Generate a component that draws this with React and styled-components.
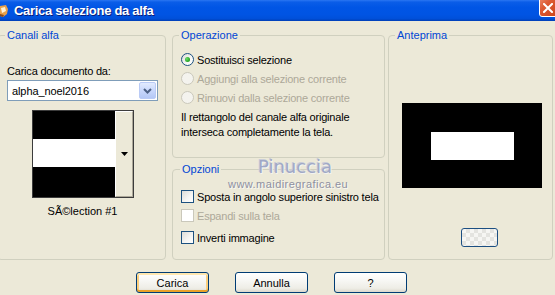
import React from "react";
import styled, { createGlobalStyle } from "styled-components";

const GlobalStyle = createGlobalStyle`
  html, body { margin: 0; padding: 0; background: #ECE9D8; overflow: hidden; }
  body { font-family: "Liberation Sans", Arial, sans-serif; font-size: 11px; color: #000; }
  * { box-sizing: border-box; }
`;

const Window = styled.div`
  position: relative;
  width: 555px;
  height: 295px;
  background: #ECE9D8;
  display: flex;
  flex-direction: column;
  overflow: hidden;
`;

const TitleBar = styled.div`
  flex: none;
  height: 21px;
  display: flex;
  align-items: center;
  overflow: hidden;
  background: linear-gradient(to bottom, #2A76F2 0%, #0A5DE8 10%, #0055E5 35%, #0054E3 70%, #0050DA 88%, #003FB6 100%);
`;

const TitleIcon = styled.svg`
  flex: none;
  width: 9px;
  height: 16px;
  margin-right: 5px;
`;

const TitleText = styled.div`
  font-weight: bold;
  font-size: 13px;
  color: #fff;
  letter-spacing: -0.3px;
  text-shadow: 1px 1px 0 #0A1E7A;
`;

const CloseButton = styled.div`
  margin-left: auto;
  margin-right: -6px;
  align-self: flex-start;
  margin-top: -4px;
  width: 22px;
  height: 21px;
  border: 1px solid #fff;
  border-radius: 3px;
  background: linear-gradient(135deg, #EC8A6C 0%, #DD5A33 35%, #C9401A 100%);
  display: flex;
  align-items: center;
  justify-content: center;
  padding-top: 3px;
  padding-right: 5px;
`;

const Content = styled.div`
  flex: none;
  height: 239px;
  padding-top: 7px;
  display: flex;
  align-items: stretch;
`;

const Group = styled.fieldset`
  margin: 0 0 0 ${(p) => p.$ml || 0}px;
  padding: 0;
  min-width: 0;
  width: ${(p) => p.$w}px;
  ${(p) => (p.$h ? `height: ${p.$h}px;` : "")}
  flex: none;
  border: 1px solid #D0D0BF;
  border-radius: 4px;
`;

const Legend = styled.legend`
  color: #0046D5;
  font-size: 11px;
  line-height: 14px;
  padding: 0 2px;
  margin-left: ${(p) => p.$ml}px;
`;

const Column = styled.div`
  display: flex;
  flex-direction: column;
  gap: 4px;
  margin-left: ${(p) => p.$ml || 0}px;
`;

const LeftBody = styled.div`
  display: flex;
  flex-direction: column;
  padding: 22px 0 0 9px;
`;

const Label = styled.div`
  line-height: 14px;
  letter-spacing: -0.2px;
`;

const Select = styled.div`
  margin-top: 2px;
  width: 151px;
  height: 21px;
  border: 1px solid #7F9DB9;
  background: #fff;
  display: flex;
  align-items: center;
  padding: 0 1px 0 4px;
`;

const SelectValue = styled.div`
  flex: 1;
  letter-spacing: -0.1px;
`;

const ComboButton = styled.div`
  width: 17px;
  height: 17px;
  border: 1px solid #BACBF6;
  border-radius: 2px;
  background: linear-gradient(to bottom, #E2EBFE 0%, #C9D8FC 50%, #B4C8F6 100%);
  display: flex;
  align-items: center;
  justify-content: center;
`;

const PickerFrame = styled.div`
  margin: 9px 0 0 25px;
  width: 102px;
  height: 88px;
  border: 1px solid #3C3C3C;
  display: flex;
`;

const PickerImage = styled.div`
  width: 82px;
  display: flex;
  flex-direction: column;
`;

const Stripe = styled.div`
  height: ${(p) => p.$h}px;
  background: ${(p) => p.$c};
`;

const PickerButton = styled.div`
  flex: 1;
  background: #ECE9D8;
  border-left: 1px solid #fff;
  border-top: 1px solid #fff;
  border-right: 1px solid #ACA899;
  border-bottom: 1px solid #ACA899;
  display: flex;
  align-items: center;
  justify-content: center;
`;

const Caption = styled.div`
  margin-top: 6px;
  width: 151px;
  text-align: center;
  line-height: 14px;
`;

const OpBody = styled.div`
  display: flex;
  flex-direction: column;
  padding: 8px 0 0 8px;
`;

const OptionRow = styled.div`
  height: 19px;
  display: flex;
  align-items: center;
  gap: 3px;
  margin-top: ${(p) => p.$mt || 0}px;
  color: ${(p) => (p.$disabled ? "#ACA899" : "#000")};
  letter-spacing: -0.2px;
`;

const Radio = styled.span`
  flex: none;
  width: 13px;
  height: 13px;
  border-radius: 50%;
  border: 1px solid ${(p) => (p.$disabled ? "#CAC8BB" : "#1C5180")};
  background: ${(p) =>
    p.$disabled ? "#F4F3EE" : "linear-gradient(135deg, #DCDCD7 0%, #F8F8F6 60%, #fff 100%)"};
  display: flex;
  align-items: center;
  justify-content: center;
`;

const RadioDot = styled.span`
  width: 5px;
  height: 5px;
  border-radius: 50%;
  background: radial-gradient(circle at 35% 35%, #6BDD6B 0%, #21A121 70%, #1A8A1A 100%);
`;

const Info = styled.div`
  margin-top: 3px;
  line-height: 15px;
  letter-spacing: -0.2px;
`;

const OptBody = styled.div`
  display: flex;
  flex-direction: column;
  padding: 11px 0 0 8px;
`;

const Checkbox = styled.span`
  flex: none;
  width: 13px;
  height: 13px;
  border: 1px solid ${(p) => (p.$disabled ? "#CAC8BB" : "#1C5180")};
  background: ${(p) =>
    p.$disabled ? "#fff" : "linear-gradient(135deg, #DCDCD7 0%, #F6F6F4 60%, #fff 100%)"};
`;

const PreviewBody = styled.div`
  display: flex;
  flex-direction: column;
  padding: 61px 0 0 13px;
`;

const PreviewCanvas = styled.div`
  width: 140px;
  height: 85px;
  background: #000;
  display: flex;
  align-items: center;
  justify-content: center;
`;

const PreviewSelection = styled.div`
  width: 83px;
  height: 28px;
  margin: 1px 0 0 1px;
  background: #fff;
`;

const BgButton = styled.div`
  margin: 40px 0 0 59px;
  width: 37px;
  height: 19px;
  border: 1px solid #1C4F82;
  border-radius: 3px;
  background-color: #F6F6F3;
  background-image: linear-gradient(45deg, #E4E4E0 25%, transparent 25%, transparent 75%, #E4E4E0 75%),
    linear-gradient(45deg, #E4E4E0 25%, transparent 25%, transparent 75%, #E4E4E0 75%);
  background-size: 8px 8px;
  background-position: 0 0, 4px 4px;
`;

const ButtonRow = styled.div`
  flex: none;
  display: flex;
  gap: 26px;
  padding: 12px 0 0 136px;
`;

const Button = styled.div`
  width: 73px;
  height: 21px;
  border: 1px solid #003C74;
  border-radius: 3px;
  background: linear-gradient(to bottom, #FFFFFF 0%, #F7F7F4 40%, #EEEDE6 80%, #DCD8CC 100%);
  display: flex;
  align-items: center;
  justify-content: center;
  font-size: 11px;
  ${(p) =>
    p.$default
      ? `box-shadow: inset 0 2px 0 #FFE7B0, inset 0 -2px 0 #E9A22A, inset 2px 0 0 #FBCF7E, inset -2px 0 0 #FBCF7E;`
      : ""}
`;

const Watermark = styled.div`
  position: absolute;
  left: 228px;
  top: 156px;
  display: flex;
  flex-direction: column;
  align-items: flex-start;
  pointer-events: none;
`;

const WatermarkName = styled.div`
  margin-left: 30px;
  font-family: "DejaVu Sans", sans-serif;
  font-size: 18px;
  line-height: 22px;
  color: #A0A8C6;
  letter-spacing: 0px;
  text-shadow: 1px 1px 0 #F4F4F0, -1px -1px 0 #C8CCD8;
`;

const WatermarkUrl = styled.div`
  font-family: "Liberation Sans", Arial, sans-serif;
  font-size: 11px;
  line-height: 12px;
  color: #8E90A0;
  letter-spacing: 0.45px;
  text-shadow: 1px 1px 0 #F8F8F4;
`;

export default function App() {
  return (
    <>
      <GlobalStyle />
      <Window>
        <TitleBar>
          <TitleIcon viewBox="0 0 9 16">
            <path d="M0 3 L6 2 L8 6 L7 11 L3 14 L0 13 Z" fill="#E8A04A" />
            <path d="M1 5 L5 4 L6 8 L2 10 Z" fill="#FFF3D8" />
            <path d="M0 11 L4 12 L3 14 L0 13 Z" fill="#8A4A1A" />
          </TitleIcon>
          <TitleText>Carica selezione da alfa</TitleText>
          <CloseButton>
            <svg width="10" height="10" viewBox="0 0 10 10">
              <path d="M1 1 L9 9 M9 1 L1 9" stroke="#fff" strokeWidth="2" strokeLinecap="square" />
            </svg>
          </CloseButton>
        </TitleBar>

        <Content>
          <Group $w={169} $ml={-3}>
            <Legend $ml={7}>Canali alfa</Legend>
            <LeftBody>
              <Label>Carica documento da:</Label>
              <Select>
                <SelectValue>alpha_noel2016</SelectValue>
                <ComboButton>
                  <svg width="9" height="6" viewBox="0 0 9 6">
                    <path d="M1 1 L4.5 4.5 L8 1" stroke="#4D6185" strokeWidth="2" fill="none" />
                  </svg>
                </ComboButton>
              </Select>
              <PickerFrame>
                <PickerImage>
                  <Stripe $h={28} $c="#000" />
                  <Stripe $h={28} $c="#fff" />
                  <Stripe $h={30} $c="#000" />
                </PickerImage>
                <PickerButton>
                  <svg width="7" height="4" viewBox="0 0 7 4">
                    <path d="M0 0 H7 L3.5 4 Z" fill="#000" />
                  </svg>
                </PickerButton>
              </PickerFrame>
              <Caption>SÃ©lection #1</Caption>
            </LeftBody>
          </Group>

          <Column $ml={6}>
            <Group $w={213} $h={130}>
              <Legend $ml={6}>Operazione</Legend>
              <OpBody>
                <OptionRow>
                  <Radio>
                    <RadioDot />
                  </Radio>
                  Sostituisci selezione
                </OptionRow>
                <OptionRow $disabled>
                  <Radio $disabled />
                  Aggiungi alla selezione corrente
                </OptionRow>
                <OptionRow $disabled>
                  <Radio $disabled />
                  Rimuovi dalla selezione corrente
                </OptionRow>
                <Info>
                  Il rettangolo del canale alfa originale
                  <br />
                  interseca completamente la tela.
                </Info>
              </OpBody>
            </Group>
            <Group $w={213} $h={98}>
              <Legend $ml={7}>Opzioni</Legend>
              <OptBody>
                <OptionRow>
                  <Checkbox />
                  Sposta in angolo superiore sinistro tela
                </OptionRow>
                <OptionRow $disabled>
                  <Checkbox $disabled />
                  Espandi sulla tela
                </OptionRow>
                <OptionRow $mt={3}>
                  <Checkbox />
                  Inverti immagine
                </OptionRow>
              </OptBody>
            </Group>
          </Column>

          <Group $w={165} $ml={3}>
            <Legend $ml={6}>Anteprima</Legend>
            <PreviewBody>
              <PreviewCanvas>
                <PreviewSelection />
              </PreviewCanvas>
              <BgButton />
            </PreviewBody>
          </Group>
        </Content>

        <ButtonRow>
          <Button $default>Carica</Button>
          <Button>Annulla</Button>
          <Button>?</Button>
        </ButtonRow>

        <Watermark>
          <WatermarkName>Pinuccia</WatermarkName>
          <WatermarkUrl>www.maidiregrafica.eu</WatermarkUrl>
        </Watermark>
      </Window>
    </>
  );
}
